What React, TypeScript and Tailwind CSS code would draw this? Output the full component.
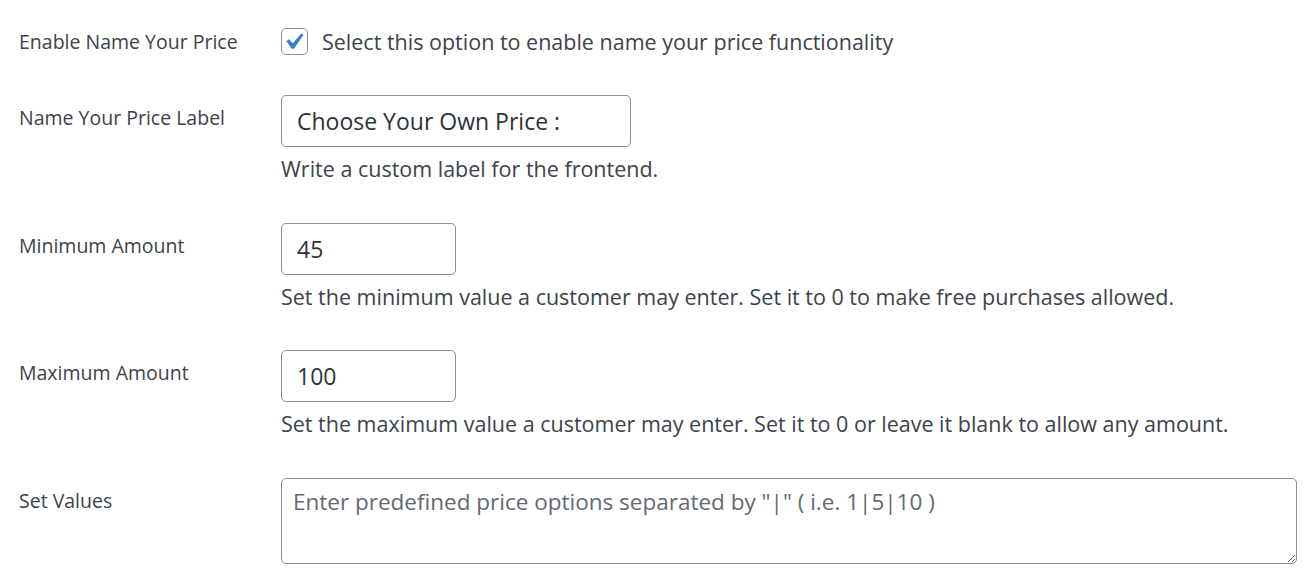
import { useState } from "react";

const font = { fontFamily: '"Open Sans", "Noto Sans", sans-serif' };

const Label = ({ children }: { children: React.ReactNode }) => (
  <div className="w-[262px] shrink-0 pt-[10px] text-[19.5px] leading-[26px] text-[#3c434a]">
    {children}
  </div>
);

const Desc = ({ children }: { children: React.ReactNode }) => (
  <p className="mt-[8px] text-[21.5px] leading-[28px] text-[#3c434a]">{children}</p>
);

const App = () => {
  const [enabled, setEnabled] = useState(true);
  const [label, setLabel] = useState("Choose Your Own Price :");
  const [min, setMin] = useState("45");
  const [max, setMax] = useState("100");
  const [values, setValues] = useState("");

  return (
    <div className="min-h-screen bg-white pl-[19px] pr-[17px] pt-[28px]" style={font}>
      {/* Enable */}
      <div className="flex items-center h-[27px]">
        <div className="w-[262px] shrink-0 text-[19.5px] leading-[26px] text-[#3c434a]">
          Enable Name Your Price
        </div>
        <label className="flex items-center gap-[14px] cursor-pointer">
          <button
            type="button"
            onClick={() => setEnabled(!enabled)}
            className="w-[27px] h-[27px] rounded-[5px] border border-[#8c8f94] bg-white flex items-center justify-center"
          >
            {enabled && (
              <svg viewBox="5 4 12 11" className="w-[20px] h-[18px] shrink-0 -mt-[1px]">
                <path
                  d="M14.83 4.89l1.34.94-5.81 8.38H9.02L5.78 9.67l1.34-1.25 2.57 2.4z"
                  fill="#3582c4"
                />
              </svg>
            )}
          </button>
          <span className="text-[21.5px] leading-[28px] text-[#3c434a]">
            Select this option to enable name your price functionality
          </span>
        </label>
      </div>

      {/* Label */}
      <div className="flex mt-[40px]">
        <Label>Name Your Price Label</Label>
        <div>
          <input
            value={label}
            onChange={(e) => setLabel(e.target.value)}
            className="w-[350px] h-[52px] rounded-[5px] border border-[#8c8f94] px-[15px] text-[23px] text-[#2c3338] outline-none"
          />
          <Desc>Write a custom label for the frontend.</Desc>
        </div>
      </div>

      {/* Minimum */}
      <div className="flex mt-[40px]">
        <Label>Minimum Amount</Label>
        <div>
          <input
            value={min}
            onChange={(e) => setMin(e.target.value)}
            className="w-[175px] h-[52px] rounded-[5px] border border-[#8c8f94] px-[15px] text-[23px] text-[#2c3338] outline-none"
          />
          <Desc>
            Set the minimum value a customer may enter. Set it to 0 to make free purchases allowed.
          </Desc>
        </div>
      </div>

      {/* Maximum */}
      <div className="flex mt-[39px]">
        <Label>Maximum Amount</Label>
        <div>
          <input
            value={max}
            onChange={(e) => setMax(e.target.value)}
            className="w-[175px] h-[52px] rounded-[5px] border border-[#8c8f94] px-[15px] text-[23px] text-[#2c3338] outline-none"
          />
          <Desc>
            Set the maximum value a customer may enter. Set it to 0 or leave it blank to allow any amount.
          </Desc>
        </div>
      </div>

      {/* Values */}
      <div className="flex mt-[40px]">
        <Label>Set Values</Label>
        <div className="flex-1">
          <textarea
            value={values}
            onChange={(e) => setValues(e.target.value)}
            placeholder={'Enter predefined price options separated by "|" ( i.e. 1|5|10 )'}
            className="block w-full h-[86px] rounded-[5px] border border-[#8c8f94] px-[11px] py-[8px] text-[22.5px] leading-[30px] text-[#2c3338] placeholder:text-[#646970] outline-none"
          />
        </div>
      </div>
    </div>
  );
};

export default App;
